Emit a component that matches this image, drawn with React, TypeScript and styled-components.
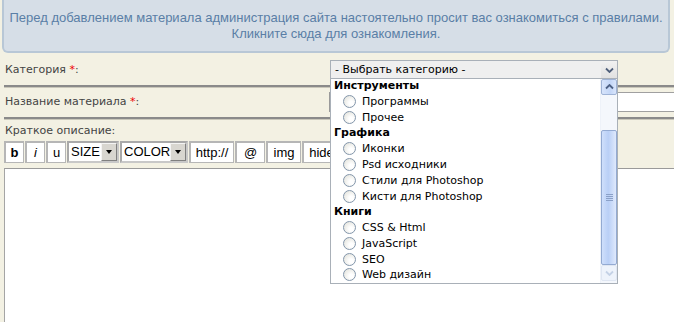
import styled, { createGlobalStyle } from 'styled-components'

const GlobalStyle = createGlobalStyle`
  html, body {
    margin: 0;
    padding: 0;
    background: #f3f1e3;
    overflow: hidden;
  }
  body {
    font-family: 'DejaVu Sans', Verdana, sans-serif;
  }
`

const Page = styled.div`
  width: 760px;
  height: 322px;
`

const Notice = styled.div`
  box-sizing: border-box;
  width: 668px;
  height: 53px;
  margin-left: 2px;
  padding-top: 10px;
  background: #d6dee7;
  border: 2px solid #b8c7d6;
  border-top: none;
  border-radius: 0 0 6px 6px;
  color: #5a7ea6;
  font: 13px/16px 'Liberation Sans', Arial, sans-serif;
  text-align: center;
`

const Form = styled.div`
  padding-left: 4px;
`

type RowProps = { $top: number; $bottom: number }

const FieldRow = styled.div<RowProps>`
  display: grid;
  grid-template-columns: 325px 1fr;
  align-items: center;
  padding: ${({ $top }) => $top}px 0 ${({ $bottom }) => $bottom}px;
  border-bottom: 2px solid #8a8a8a;
  box-shadow: 0 1px 0 #c9c7ba;
`

const Label = styled.div`
  padding-left: 1px;
  font-size: 11px;
  line-height: 14px;
  color: #444;
`

const Req = styled.span`
  color: #e00;
`

const SelectWrap = styled.div`
  position: relative;
  width: 288px;
  margin-left: 1px;
`

const SelectBox = styled.div`
  box-sizing: border-box;
  display: flex;
  height: 19px;
  border: 1px solid #a9b0b8;
  background: #efefef;
  font-size: 11px;
  line-height: 17px;
  color: #000;
`

const SelectText = styled.div`
  flex: 1;
  padding-left: 4px;
`

const SelectArrow = styled.div`
  width: 16px;
  display: flex;
  align-items: center;
  justify-content: center;
  background: linear-gradient(#f1f1f1, #e1e1e1);
`

const DropList = styled.div`
  position: absolute;
  top: 18px;
  left: 0;
  right: 0;
  height: 206px;
  box-sizing: border-box;
  display: flex;
  background: #fff;
  border: 1px solid #a9b0b8;
  z-index: 5;
`

const Options = styled.div`
  flex: 1;
  overflow: hidden;
`

const OptionsInner = styled.div`
  margin-top: -1px;
`

const GroupTitle = styled.div`
  height: 15.75px;
  line-height: 15.75px;
  padding-left: 3px;
  font-size: 11px;
  font-weight: bold;
  color: #000;
`

const Option = styled.div`
  display: flex;
  align-items: center;
  gap: 6px;
  height: 15.75px;
  padding-left: 12px;
  font-size: 11px;
  color: #000;
`

const Radio = styled.span`
  box-sizing: border-box;
  width: 13px;
  height: 13px;
  border-radius: 50%;
  border: 1px solid #8396ab;
  background: radial-gradient(circle at 65% 65%, #ffffff 20%, #e6e6e0 80%);
`

const ScrollBar = styled.div`
  width: 16px;
  display: flex;
  flex-direction: column;
  background: #f4f7fc;
  border-left: 1px solid #eef2f9;
`

type ArrowBtnProps = { $disabled?: boolean }

const ScrollBtn = styled.div<ArrowBtnProps>`
  box-sizing: border-box;
  height: 16px;
  display: flex;
  align-items: center;
  justify-content: center;
  border: 1px solid ${({ $disabled }) => ($disabled ? '#dfe6f2' : '#9fb3d6')};
  border-radius: 2px;
  background: ${({ $disabled }) =>
    $disabled ? '#eef3fb' : 'linear-gradient(90deg, #d7e4fb, #c3d6f7 60%, #d9e5fb)'};
`

const Track = styled.div`
  height: 35px;
`

const Thumb = styled.div`
  box-sizing: border-box;
  height: 135px;
  display: flex;
  align-items: center;
  justify-content: center;
  border: 1px solid #93aad2;
  border-radius: 2px;
  background: linear-gradient(90deg, #cfdffb, #b9cff6 45%, #dfe9fc);
`

const Grip = styled.div`
  width: 7px;
  height: 7px;
  background: repeating-linear-gradient(#8aa0c8 0 1px, transparent 1px 2px);
`

const TextInput = styled.div`
  box-sizing: border-box;
  height: 20px;
  border: 1px solid #a0a0a0;
  border-left: 2px solid #9a9a9a;
  background: #fff;
`

const DescBlock = styled.div`
  padding-top: 5px;
`

const Toolbar = styled.div`
  display: flex;
  gap: 1px;
  margin-top: 3px;
  height: 22px;
`

type ToolProps = { $w: number; $bold?: boolean; $italic?: boolean }

const ToolButton = styled.div<ToolProps>`
  box-sizing: border-box;
  width: ${({ $w }) => $w}px;
  height: 22px;
  display: flex;
  align-items: center;
  justify-content: center;
  background: #fff;
  border: 2px solid #b6b6b6;
  border-right-width: 1px;
  border-bottom-width: 1px;
  font: ${({ $italic }) => ($italic ? 'italic ' : '')}${({ $bold }) => ($bold ? 'bold ' : '')}13px 'Liberation Sans', Arial, sans-serif;
  color: #000;
`

const ToolSelect = styled.div<{ $w: number }>`
  box-sizing: border-box;
  width: ${({ $w }) => $w}px;
  height: 22px;
  display: flex;
  background: #fff;
  border: 2px solid #a9a9a9;
  border-right-color: #c8c8c8;
  border-bottom-color: #c8c8c8;
  font: 13px 'Liberation Sans', Arial, sans-serif;
  color: #000;
`

const ToolSelectText = styled.div`
  flex: 1;
  padding-left: 2px;
  line-height: 18px;
`

const ToolSelectArrow = styled.div`
  box-sizing: border-box;
  width: 16px;
  display: flex;
  align-items: center;
  justify-content: center;
  background: #d8d6d0;
  border-top: 1px solid #f4f4f4;
  border-left: 1px solid #f4f4f4;
  border-right: 1px solid #808080;
  border-bottom: 1px solid #808080;
  &::after {
    content: '';
    border-left: 3.5px solid transparent;
    border-right: 3.5px solid transparent;
    border-top: 4px solid #000;
  }
`

const TextArea = styled.div`
  box-sizing: border-box;
  margin-top: 5px;
  height: 160px;
  border: 1px solid #a5a5a5;
  border-top-color: #9a9a9a;
  background: #fff;
`

const Chevron = ({ dir, color }: { dir: 'up' | 'down'; color: string }) => (
  <svg width="9" height="6" viewBox="0 0 9 6">
    <path
      d={dir === 'down' ? 'M1 1.5 L4.5 5 L8 1.5' : 'M1 4.5 L4.5 1 L8 4.5'}
      fill="none"
      stroke={color}
      strokeWidth="1.8"
    />
  </svg>
)

const groups = [
  { title: 'Инструменты', items: ['Программы', 'Прочее'] },
  { title: 'Графика', items: ['Иконки', 'Psd исходники', 'Стили для Photoshop', 'Кисти для Photoshop'] },
  { title: 'Книги', items: ['CSS & Html', 'JavaScript', 'SEO', 'Web дизайн'] },
]

export default function App() {
  return (
    <Page>
      <GlobalStyle />
      <Notice>
        Перед добавлением материала администрация сайта настоятельно просит вас ознакомиться с правилами.
        <br />
        Кликните сюда для ознакомления.
      </Notice>
      <Form>
        <FieldRow $top={7} $bottom={6}>
          <Label>
            Категория <Req>*</Req>:
          </Label>
          <SelectWrap>
            <SelectBox>
              <SelectText>- Выбрать категорию -</SelectText>
              <SelectArrow>
                <Chevron dir="down" color="#4f5f7a" />
              </SelectArrow>
            </SelectBox>
            <DropList>
              <Options>
                <OptionsInner>
                  {groups.map((g) => (
                    <div key={g.title}>
                      <GroupTitle>{g.title}</GroupTitle>
                      {g.items.map((it) => (
                        <Option key={it}>
                          <Radio />
                          {it}
                        </Option>
                      ))}
                    </div>
                  ))}
                </OptionsInner>
              </Options>
              <ScrollBar>
                <ScrollBtn>
                  <Chevron dir="up" color="#4d6185" />
                </ScrollBtn>
                <Track />
                <Thumb>
                  <Grip />
                </Thumb>
                <ScrollBtn $disabled>
                  <Chevron dir="down" color="#c5d2e6" />
                </ScrollBtn>
              </ScrollBar>
            </DropList>
          </SelectWrap>
        </FieldRow>
        <FieldRow $top={5} $bottom={5}>
          <Label>
            Название материала <Req>*</Req>:
          </Label>
          <TextInput />
        </FieldRow>
        <DescBlock>
          <Label>Краткое описание:</Label>
          <Toolbar>
            <ToolButton $w={20} $bold>b</ToolButton>
            <ToolButton $w={20} $italic>i</ToolButton>
            <ToolButton $w={20}>u</ToolButton>
            <ToolSelect $w={52}>
              <ToolSelectText>SIZE</ToolSelectText>
              <ToolSelectArrow />
            </ToolSelect>
            <ToolSelect $w={68}>
              <ToolSelectText>COLOR</ToolSelectText>
              <ToolSelectArrow />
            </ToolSelect>
            <ToolButton $w={45}>http://</ToolButton>
            <ToolButton $w={30}>@</ToolButton>
            <ToolButton $w={35}>img</ToolButton>
            <ToolButton $w={38}>hide</ToolButton>
          </Toolbar>
          <TextArea />
        </DescBlock>
      </Form>
    </Page>
  )
}
